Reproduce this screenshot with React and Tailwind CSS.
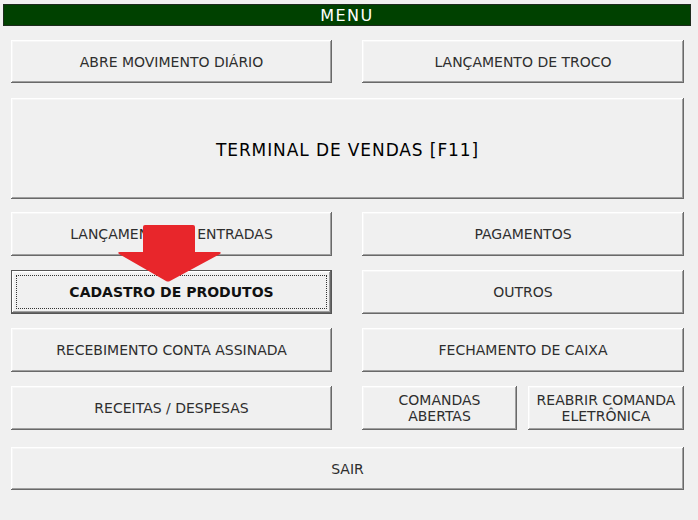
import React from "react";

const bevel =
  "shadow-[inset_-1px_-1px_#696969,inset_1px_1px_#ffffff,inset_-2px_-2px_#a0a0a0,inset_2px_2px_#f6f6f6]";

function Btn({ label, className = "", focused = false, big = false }) {
  if (focused) {
    return (
      <button
        className={`relative flex items-center justify-center border border-[#555] bg-[#f0f0f0] ${bevel} ${className}`}
      >
        <span className="absolute inset-[4px] border border-dotted border-[#333]" />
        <span className="text-[14px] font-bold text-[#111]">{label}</span>
      </button>
    );
  }
  return (
    <button
      className={`flex items-center justify-center bg-[#f0f0f0] leading-[16px] ${bevel} ${
        big ? "pt-[3px] text-[17px] tracking-[0.9px] text-black" : "text-[14px] text-[#2e2e2e]"
      } ${className}`}
    >
      {label}
    </button>
  );
}

export default function App() {
  return (
    <div
      className="relative h-[520px] w-[698px] overflow-hidden bg-[#f0f0f0]"
      style={{ fontFamily: '"DejaVu Sans", Tahoma, sans-serif' }}
    >
      <div className="ml-[3px] mr-[7px] mt-[4px] flex h-[22px] items-center justify-center border border-[#1d2b1d] bg-[#004100] pt-[1px] text-[16px] tracking-[1.5px] text-white">
        MENU
      </div>

      <div className="mt-[14px] flex flex-col pl-[11px] pr-[14px]">
        <div className="flex h-[43px] gap-[30px]">
          <Btn label="ABRE MOVIMENTO DIÁRIO" className="w-[321px]" />
          <Btn label="LANÇAMENTO DE TROCO" className="flex-1" />
        </div>

        <Btn label="TERMINAL DE VENDAS [F11]" big className="mt-[15px] h-[101px] w-full" />

        <div className="mt-[13px] flex h-[44px] gap-[30px]">
          <Btn label="LANÇAMENTO DE ENTRADAS" className="w-[321px]" />
          <Btn label="PAGAMENTOS" className="flex-1" />
        </div>

        <div className="mt-[14px] flex h-[44px] gap-[30px]">
          <Btn label="CADASTRO DE PRODUTOS" focused className="w-[321px]" />
          <Btn label="OUTROS" className="flex-1" />
        </div>

        <div className="mt-[14px] flex h-[44px] gap-[30px]">
          <Btn label="RECEBIMENTO CONTA ASSINADA" className="w-[321px]" />
          <Btn label="FECHAMENTO DE CAIXA" className="flex-1" />
        </div>

        <div className="mt-[14px] flex h-[44px] gap-[30px]">
          <Btn label="RECEITAS / DESPESAS" className="w-[321px]" />
          <div className="flex flex-1 gap-[11px]">
            <Btn label={<>COMANDAS<br />ABERTAS</>} className="w-[155px]" />
            <Btn label={<>REABRIR COMANDA<br />ELETRÔNICA</>} className="flex-1" />
          </div>
        </div>

        <Btn label="SAIR" className="mt-[17px] h-[43px] w-full" />
      </div>

      <svg
        className="pointer-events-none absolute left-0 top-0"
        width="698"
        height="520"
        viewBox="0 0 698 520"
      >
        <path
          d="M145 225 L193 225 Q195 225 195 227 L195 252 L219 252 Q222 252 220 254 L170 281 Q168 282 166 281 L119 254 Q117 252 120 252 L143 252 L143 227 Q143 225 145 225 Z"
          fill="#e8262b"
        />
      </svg>
    </div>
  );
}
